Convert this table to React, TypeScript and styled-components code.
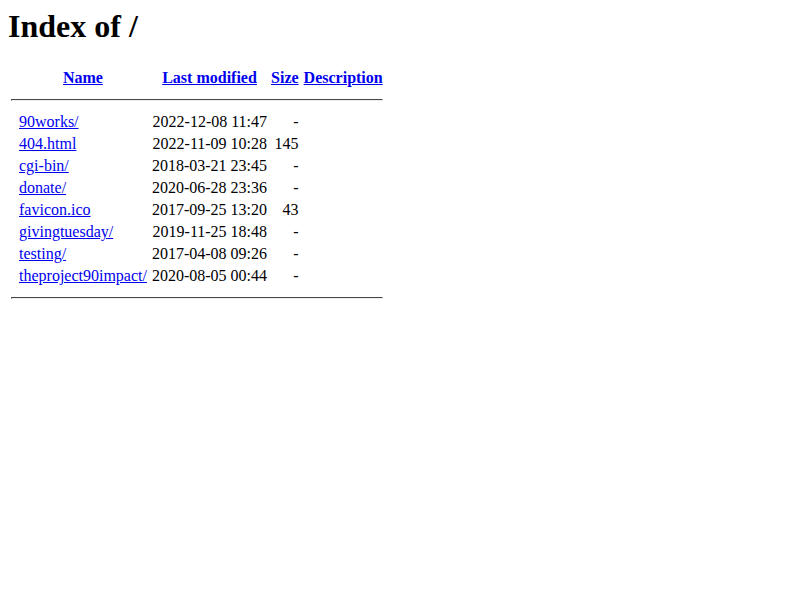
import styled, { createGlobalStyle } from "styled-components";

const GlobalStyle = createGlobalStyle`
  body {
    margin: 8px;
    background: #ffffff;
    color: #000000;
    font-family: "Liberation Serif", "Times New Roman", serif;
    font-size: 16px;
  }
`;

type Entry = {
  name: string;
  modified: string;
  size: string;
};

const entries: Entry[] = [
  { name: "90works/", modified: "2022-12-08 11:47", size: "-" },
  { name: "404.html", modified: "2022-11-09 10:28", size: "145" },
  { name: "cgi-bin/", modified: "2018-03-21 23:45", size: "-" },
  { name: "donate/", modified: "2020-06-28 23:36", size: "-" },
  { name: "favicon.ico", modified: "2017-09-25 13:20", size: "43" },
  { name: "givingtuesday/", modified: "2019-11-25 18:48", size: "-" },
  { name: "testing/", modified: "2017-04-08 09:26", size: "-" },
  { name: "theproject90impact/", modified: "2020-08-05 00:44", size: "-" },
];

const Title = styled.h1`
  margin: 0 0 21px;
  font-size: 32px;
  font-weight: bold;
`;

const Listing = styled.table`
  border-collapse: separate;
  border-spacing: 2px;
  font-size: 16px;
`;

type HeadProps = {
  $wide?: boolean;
};

const HeaderCell = styled.th<HeadProps>`
  padding: 1px;
  padding-left: ${(props) => (props.$wide ? "2px" : "1px")};
  text-align: center;
  font-weight: bold;
`;

type CellProps = {
  $align?: "left" | "right";
  $wide?: boolean;
};

const Cell = styled.td<CellProps>`
  padding: 1px;
  padding-left: ${(props) => (props.$wide ? "2px" : "1px")};
  text-align: ${(props) => props.$align ?? "left"};
  white-space: nowrap;
`;

const IconCell = styled.td`
  padding: 1px;
  width: 4px;
`;

const IconHead = styled.th`
  padding: 1px;
  width: 4px;
`;

const Link = styled.a`
  color: #0000ee;
  text-decoration: underline;
`;

const Rule = styled.hr`
  margin: 8px 0;
  border: 1px inset #eeeeee;
  border-top-color: #9a9a9a;
  border-left-color: #9a9a9a;
  height: 0;
`;

function App() {
  return (
    <>
      <GlobalStyle />
      <Title>Index of /</Title>
      <Listing>
        <tbody>
          <tr>
            <IconHead></IconHead>
            <HeaderCell>
              <Link href="#">Name</Link>
            </HeaderCell>
            <HeaderCell $wide>
              <Link href="#">Last modified</Link>
            </HeaderCell>
            <HeaderCell>
              <Link href="#">Size</Link>
            </HeaderCell>
            <HeaderCell $wide>
              <Link href="#">Description</Link>
            </HeaderCell>
          </tr>
          <tr>
            <HeaderCell colSpan={5}>
              <Rule />
            </HeaderCell>
          </tr>
          {entries.map((entry) => (
            <tr key={entry.name}>
              <IconCell></IconCell>
              <Cell>
                <Link href="#">{entry.name}</Link>
              </Cell>
              <Cell $align="right" $wide>
                {entry.modified}{" "}
              </Cell>
              <Cell $align="right">{entry.size}</Cell>
              <Cell $wide>&nbsp;</Cell>
            </tr>
          ))}
          <tr>
            <HeaderCell colSpan={5}>
              <Rule />
            </HeaderCell>
          </tr>
        </tbody>
      </Listing>
    </>
  );
}

export default App;
